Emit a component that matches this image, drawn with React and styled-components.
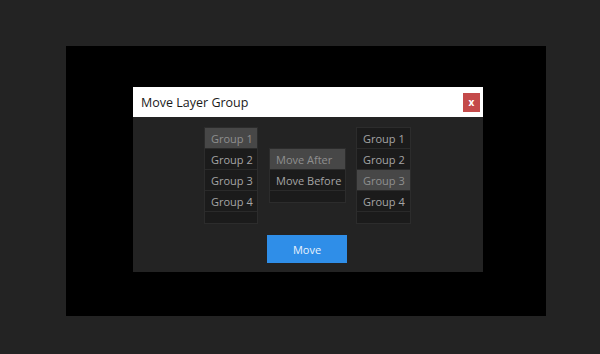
import React from "react";
import styled, { createGlobalStyle } from "styled-components";

const Global = createGlobalStyle`
  html, body { margin: 0; padding: 0; background: #232323; }
  body { font-family: "Open Sans", "Noto Sans", sans-serif; }
`;

const Page = styled.div`
  width: 600px;
  height: 354px;
  padding: 46px 0 0 66px;
  box-sizing: border-box;
`;

const Backdrop = styled.div`
  width: 480px;
  height: 270px;
  background: #000;
  padding: 41px 0 0 67px;
  box-sizing: border-box;
`;

const Dialog = styled.div`
  width: 350px;
  height: 185px;
  background: #232323;
  display: flex;
  flex-direction: column;
`;

const TitleBar = styled.div`
  height: 30px;
  background: #fff;
  display: flex;
  align-items: center;
  justify-content: space-between;
  padding: 0 3px 0 8px;
  box-sizing: border-box;
`;

const Title = styled.div`
  font-size: 12.5px;
  color: #1a1a1a;
`;

const Close = styled.div`
  width: 17px;
  height: 19px;
  background: #c44a4a;
  color: #fff;
  font-size: 10px;
  font-weight: 700;
  display: flex;
  align-items: center;
  justify-content: center;
  line-height: 1;
`;

const Body = styled.div`
  display: flex;
  flex-direction: column;
  align-items: center;
  padding-top: 10px;
`;

const Lists = styled.div`
  display: flex;
  align-items: center;
  margin-left: -1px;
`;

const List = styled.div`
  width: ${p => p.$w}px;
  margin-left: ${p => p.$gap || 0}px;
  box-sizing: border-box;
  background: #1b1b1b;
  border: 1px solid #2c2c2c;
  display: flex;
  flex-direction: column;
`;

const Row = styled.div`
  height: 20px;
  border-bottom: 1px solid #2a2a2a;
  background: ${p => (p.$active ? "#474747" : "transparent")};
  color: ${p => (p.$active ? "#8f8f8f" : "#a5a5a5")};
  font-size: 11px;
  line-height: 22px;
  padding-left: 6px;
  white-space: nowrap;
`;

const Spacer = styled.div`
  height: 11px;
`;

const Button = styled.div`
  margin-top: 11px;
  width: 80px;
  height: 28px;
  background: #2f8ee8;
  color: #e8f2fc;
  font-size: 11px;
  display: flex;
  align-items: center;
  justify-content: center;
  margin-left: -2px;
`;

const groups = ["Group 1", "Group 2", "Group 3", "Group 4"];

export default function App() {
  return (
    <Page>
      <Global />
      <Backdrop>
        <Dialog>
          <TitleBar>
            <Title>Move Layer Group</Title>
            <Close>x</Close>
          </TitleBar>
          <Body>
            <Lists>
              <List $w={54}>
                {groups.map((g, i) => (
                  <Row key={g} $active={i === 0}>{g}</Row>
                ))}
                <Spacer />
              </List>
              <List $w={77} $gap={11}>
                <Row $active>Move After</Row>
                <Row>Move Before</Row>
                <Spacer />
              </List>
              <List $w={55} $gap={10}>
                {groups.map((g, i) => (
                  <Row key={g} $active={i === 2}>{g}</Row>
                ))}
                <Spacer />
              </List>
            </Lists>
            <Button>Move</Button>
          </Body>
        </Dialog>
      </Backdrop>
    </Page>
  );
}
